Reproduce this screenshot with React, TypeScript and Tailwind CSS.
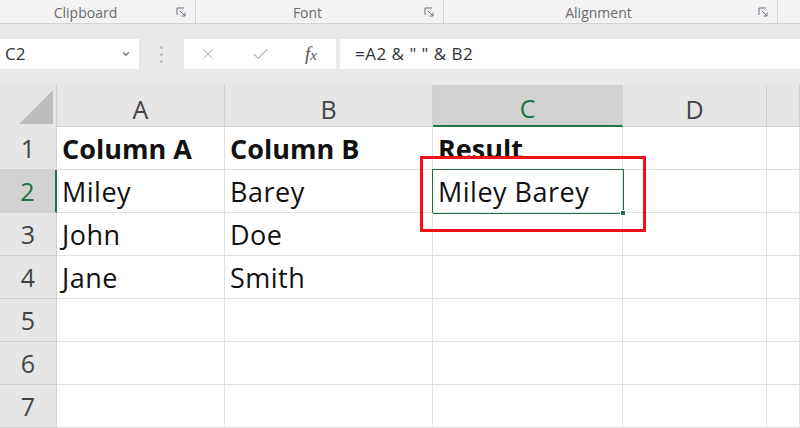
import { ChevronDown, X, Check } from "lucide-react";

const cols = [
  { key: "A", w: "w-[168px]" },
  { key: "B", w: "w-[208px]" },
  { key: "C", w: "w-[190px]" },
  { key: "D", w: "w-[144px]" },
  { key: "E", w: "flex-1" },
];

const rows: { n: number; cells: string[]; bold?: boolean }[] = [
  { n: 1, cells: ["Column A", "Column B", "Result", "", ""], bold: true },
  { n: 2, cells: ["Miley", "Barey", "Miley Barey", "", ""] },
  { n: 3, cells: ["John", "Doe", "", "", ""] },
  { n: 4, cells: ["Jane", "Smith", "", "", ""] },
  { n: 5, cells: ["", "", "", "", ""] },
  { n: 6, cells: ["", "", "", "", ""] },
  { n: 7, cells: ["", "", "", "", ""] },
];

function Launcher() {
  return (
    <svg width="10" height="10" viewBox="0 0 10 10" className="text-gray-500">
      <path d="M1 8V1h7" fill="none" stroke="currentColor" strokeWidth="1" />
      <path d="M4 4l5 5M9 5.5V9H5.5" fill="none" stroke="currentColor" strokeWidth="1" />
    </svg>
  );
}

function GroupLabel({ label, w }: { label: string; w: string }) {
  return (
    <div className={`${w} relative flex h-full items-center justify-center border-r border-[#d6d6d6] pr-[24px] pt-[2px]`}>
      <span>{label}</span>
      <span className="absolute right-[9px] top-[7px]">
        <Launcher />
      </span>
    </div>
  );
}

export default function App() {
  return (
    <div className="flex h-[428px] w-[800px] flex-col overflow-hidden bg-[#e9e9e9] font-['Open_Sans',sans-serif]">
      {/* ribbon group labels */}
      <div className="flex h-[24px] border-b border-[#d4d4d4] bg-[#f3f3f3] text-[14px] text-[#6b6b6b]">
        <GroupLabel label="Clipboard" w="w-[196px]" />
        <GroupLabel label="Font" w="w-[248px]" />
        <GroupLabel label="Alignment" w="w-[334px]" />
        <div className="flex-1" />
      </div>

      {/* formula bar */}
      <div className="flex h-[61px] items-start pt-[15px]">
        <div className="flex h-[30px] w-[139px] items-center justify-between bg-white pl-[5px] pr-[8px] text-[17px] text-[#333]">
          <span>C2</span>
          <ChevronDown size={10} strokeWidth={3} className="text-gray-500" />
        </div>
        <div className="flex h-[30px] w-[45px] flex-col items-center justify-center gap-[4px]">
          <span className="h-[3px] w-[3px] rounded-full bg-[#bbb]" />
          <span className="h-[3px] w-[3px] rounded-full bg-[#bbb]" />
          <span className="h-[3px] w-[3px] rounded-full bg-[#bbb]" />
        </div>
        <div className="flex h-[30px] w-[152px] items-center bg-white text-[#a8a8a8]">
          <span className="flex w-[48px] justify-center">
            <X size={20} strokeWidth={1.1} />
          </span>
          <span className="flex w-[56px] justify-center">
            <Check size={19} strokeWidth={1.4} className="text-[#b5b5b5]" />
          </span>
          <span className="flex flex-1 items-baseline justify-center pr-[2px] font-['Liberation_Serif',serif] text-[19px] italic text-[#555]">
            f<span className="text-[15px]">x</span>
          </span>
        </div>
        <div className="ml-[4px] flex h-[30px] flex-1 items-center bg-white pl-[15px] text-[17px] tracking-[0.5px] text-[#333]">
          =A2 &amp; " " &amp; B2
        </div>
      </div>

      {/* grid */}
      <div className="relative flex-1 bg-white">
        {/* column header row */}
        <div className="flex h-[42px] bg-[#e6e6e6] text-[25px] text-[#444]">
          <div className="flex w-[57px] items-end justify-end border-r border-[#d0d0d0] pb-[3px] pr-[3px]">
            <svg width="34" height="34" viewBox="0 0 34 34">
              <path d="M34 0V34H0Z" fill="#bdbdbd" />
            </svg>
          </div>
          {cols.map((c) => (
            <div
              key={c.key}
              className={`${c.w} flex items-center justify-center border-r border-[#d0d0d0] pt-[8px] ${
                c.key === "C" ? "border-b-2 border-b-[#217346] bg-[#d2d2d2] text-[#217346]" : "border-b border-b-[#d0d0d0]"
              }`}
            >
              {c.key === "E" ? "" : c.key}
            </div>
          ))}
        </div>

        {rows.map((r) => (
          <div key={r.n} className="flex h-[43px] text-[27px] text-[#111]">
            <div
              className={`flex w-[57px] items-center justify-center border-b border-[#d0d0d0] pt-[2px] text-[25px] ${
                r.n === 2
                  ? "border-r-2 border-r-[#217346] bg-[#d2d2d2] text-[#217346]"
                  : "border-r border-r-[#d0d0d0] bg-[#e6e6e6] text-[#444]"
              }`}
            >
              {r.n}
            </div>
            {r.cells.map((v, i) => (
              <div
                key={i}
                className={`${cols[i].w} flex items-center whitespace-nowrap border-b border-r border-[#e0e0e0] pl-[5px] pt-[2px] tracking-[0.5px] ${
                  r.bold ? "font-bold tracking-[0px]" : ""
                } ${r.n === 2 && i === 2 ? "border-[#217346] outline outline-1 outline-[#217346]" : ""}`}
              >
                {v}
              </div>
            ))}
          </div>
        ))}

        {/* fill handle */}
        <div className="absolute left-[620px] top-[125px] h-[6px] w-[6px] border border-white bg-[#217346]" />
        {/* highlight */}
        <div className="absolute left-[420px] top-[71px] h-[76px] w-[226px] border-[3px] border-[#f0101a]" />
      </div>
    </div>
  );
}
